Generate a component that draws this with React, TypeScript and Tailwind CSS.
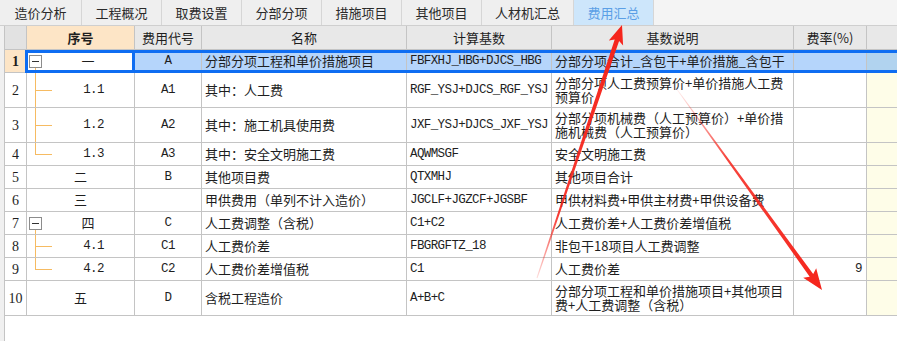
import React from 'react';

type Row = {
  n: string;
  seq: string;
  tree?: 'parent' | 'child' | 'last';
  code: string;
  name: string;
  base: string;
  desc: string;
  rate?: string;
  tall?: boolean;
};

const rows: Row[] = [
  { n: '1', seq: '一', tree: 'parent', code: 'A', name: '分部分项工程和单价措施项目', base: 'FBFXHJ_HBG+DJCS_HBG', desc: '分部分项合计_含包干+单价措施_含包干' },
  { n: '2', seq: '1.1', tree: 'child', code: 'A1', name: '其中：人工费', base: 'RGF_YSJ+DJCS_RGF_YSJ', desc: '分部分项人工费预算价+单价措施人工费预算价', tall: true },
  { n: '3', seq: '1.2', tree: 'child', code: 'A2', name: '其中：施工机具使用费', base: 'JXF_YSJ+DJCS_JXF_YSJ', desc: '分部分项机械费（人工预算价）+单价措施机械费（人工预算价）', tall: true },
  { n: '4', seq: '1.3', tree: 'last', code: 'A3', name: '其中：安全文明施工费', base: 'AQWMSGF', desc: '安全文明施工费' },
  { n: '5', seq: '二', code: 'B', name: '其他项目费', base: 'QTXMHJ', desc: '其他项目合计' },
  { n: '6', seq: '三', code: '', name: '甲供费用（单列不计入造价）', base: 'JGCLF+JGZCF+JGSBF', desc: '甲供材料费+甲供主材费+甲供设备费' },
  { n: '7', seq: '四', tree: 'parent', code: 'C', name: '人工费调整（含税）', base: 'C1+C2', desc: '人工费价差+人工费价差增值税' },
  { n: '8', seq: '4.1', tree: 'child', code: 'C1', name: '人工费价差', base: 'FBGRGFTZ_18', desc: '非包干18项目人工费调整' },
  { n: '9', seq: '4.2', tree: 'last', code: 'C2', name: '人工费价差增值税', base: 'C1', desc: '人工费价差', rate: '9' },
  { n: '10', seq: '五', code: 'D', name: '含税工程造价', base: 'A+B+C', desc: '分部分项工程和单价措施项目+其他项目费+人工费调整（含税）', tall: true },
];

const tabs = [
  { label: '造价分析', w: 'w-[82px]' },
  { label: '工程概况', w: 'w-[80px]' },
  { label: '取费设置', w: 'w-[80px]' },
  { label: '分部分项', w: 'w-[80px]' },
  { label: '措施项目', w: 'w-[80px]' },
  { label: '其他项目', w: 'w-[80px]' },
  { label: '人材机汇总', w: 'w-[92px]' },
  { label: '费用汇总', w: 'w-[80px]', active: true },
];

const cols = 'grid grid-cols-[22px_108px_67px_205px_145px_242px_73px_1fr]';
const cell = 'border-r border-b border-[#c4c4c4] flex items-center overflow-hidden';
const mono = "font-['Liberation_Mono',monospace] text-[12.5px] tracking-[-0.6px]";

// polygon for a tapered arrow, tail -> tip
function arrowPoints(x1: number, y1: number, x2: number, y2: number, w0: number, w1: number, hl: number, hw: number) {
  const dx = x2 - x1;
  const dy = y2 - y1;
  const L = Math.hypot(dx, dy);
  const ux = dx / L;
  const uy = dy / L;
  const nx = -uy;
  const ny = ux;
  const bx = x2 - ux * hl;
  const by = y2 - uy * hl;
  const nb = 3; // small notch at the back of the head
  const pts = [
    [x1 + nx * w0, y1 + ny * w0],
    [bx + nx * w1 + ux * nb, by + ny * w1 + uy * nb],
    [bx + nx * hw, by + ny * hw],
    [x2, y2],
    [bx - nx * hw, by - ny * hw],
    [bx - nx * w1 + ux * nb, by - ny * w1 + uy * nb],
    [x1 - nx * w0, y1 - ny * w0],
  ];
  return pts.map(p => `${p[0].toFixed(1)},${p[1].toFixed(1)}`).join(' ');
}

const ExpandBox = () => (
  <div className="shrink-0 ml-[2px] w-[13px] h-[13px] border border-[#8c8c8c] bg-white flex items-center justify-center">
    <div className="w-[7px] h-px bg-[#333]" />
  </div>
);

const SeqCell: React.FC<{ row: Row }> = ({ row }) => {
  const base = `${cell} relative bg-white`;
  if (row.tree === 'parent') {
    return (
      <div className={base}>
        <ExpandBox />
        <div className="absolute left-[8px] top-[calc(50%+7px)] bottom-[-1px] w-px bg-[#f6bb62]" />
        <div className="flex-1 text-center">{row.seq}</div>
      </div>
    );
  }
  if (row.tree === 'child' || row.tree === 'last') {
    return (
      <div className={base}>
        <div className={`absolute left-[8px] top-[-1px] w-px bg-[#f6bb62] ${row.tree === 'last' ? 'h-[calc(50%+1px)]' : 'bottom-[-1px]'}`} />
        <div className="absolute left-[8px] top-1/2 w-[17px] h-px bg-[#f6bb62]" />
        <div className={`flex-1 text-center pl-[26px] ${mono}`}>{row.seq}</div>
      </div>
    );
  }
  return (
    <div className={base}>
      <div className="flex-1 text-center">{row.seq}</div>
    </div>
  );
};

export default function App() {
  return (
    <div className="relative w-[897px] h-[341px] overflow-hidden bg-white text-[13px] text-[#1e1e1e] font-['Noto_Sans_CJK_SC',sans-serif]">
      {/* tabs */}
      <div className="flex h-[26px] bg-[#f4f4f4] border-b border-[#cfcfcf]">
        {tabs.map(t => (
          <div
            key={t.label}
            className={`${t.w} flex items-center justify-center border-r border-[#d6d6d6] ${t.active ? 'bg-[#cde6fb] text-[#5b9fe6]' : 'bg-[#efefef] text-[#2a2a2a]'}`}
          >
            {t.label}
          </div>
        ))}
      </div>

      <div className="flex">
        <div className="w-[5px] h-[315px] bg-[#f0f0f0] border-r border-[#c4c4c4]" />
        <div className="flex-1">
          {/* header */}
          <div className={`${cols} h-[24px] bg-[#e8e8e8]`}>
            <div className={`${cell} bg-[#e2e2e2]`} />
            <div className={`${cell} justify-center bg-[#fde5c6] font-bold`}>序号</div>
            <div className={`${cell} justify-center`}>费用代号</div>
            <div className={`${cell} justify-center`}>名称</div>
            <div className={`${cell} justify-center`}>计算基数</div>
            <div className={`${cell} justify-center`}>基数说明</div>
            <div className={`${cell} justify-center`}>费率(%)</div>
            <div className="border-b border-[#c4c4c4]" />
          </div>

          {rows.map((r, i) => {
            const sel = i === 0;
            const rowBg = sel ? 'bg-[#b5d5fb]' : 'bg-white';
            return (
              <div key={r.n} className={`${cols} relative ${r.tall ? 'h-[35px]' : 'h-[23px]'}`}>
                <div className={`${cell} justify-center font-['Liberation_Serif',serif] text-[14px] ${sel ? 'bg-[#fde5c6] font-bold' : 'bg-white'}`}>{r.n}</div>
                <SeqCell row={r} />
                <div className={`${cell} justify-center ${mono} ${rowBg}`}>{r.code}</div>
                <div className={`${cell} px-[3px] whitespace-nowrap ${rowBg}`}>{r.name}</div>
                <div className={`${cell} px-[3px] whitespace-nowrap ${mono} ${rowBg}`}>{r.base}</div>
                <div className={`${cell} pl-[3px] pr-[4px] leading-[14px] ${rowBg}`}>{r.desc}</div>
                <div className={`${cell} justify-end pr-[4px] ${mono} ${rowBg}`}>{r.rate}</div>
                <div className={`border-b border-[#c4c4c4] ${sel ? 'bg-[#b1d3ef]' : 'bg-[#fefde8]'}`} />
                {sel && (
                  <>
                    <div className="absolute left-[20px] right-0 top-0 bottom-0 border-y-[3px] border-[#0e6df2] pointer-events-none" />
                    <div className="absolute left-[20px] w-[110px] top-0 bottom-0 border-[3px] border-[#0e6df2] pointer-events-none" />
                  </>
                )}
              </div>
            );
          })}
        </div>
      </div>

      {/* red annotation arrows */}
      <svg className="absolute inset-0 pointer-events-none" width="897" height="341" viewBox="0 0 897 341">
        <defs>
          <linearGradient id="g1" gradientUnits="userSpaceOnUse" x1="537" y1="278" x2="622" y2="25">
            <stop offset="0" stopColor="#f5241b" stopOpacity="0.15" />
            <stop offset="0.25" stopColor="#f5241b" stopOpacity="0.9" />
            <stop offset="1" stopColor="#f5241b" />
          </linearGradient>
          <linearGradient id="g2" gradientUnits="userSpaceOnUse" x1="676" y1="88" x2="822" y2="290">
            <stop offset="0" stopColor="#f5241b" stopOpacity="0.05" />
            <stop offset="0.35" stopColor="#f5241b" stopOpacity="0.85" />
            <stop offset="1" stopColor="#f5241b" />
          </linearGradient>
        </defs>
        <polygon points={arrowPoints(537, 278, 622, 25, 0.5, 2.3, 19, 7.5)} fill="url(#g1)" />
        <polygon points={arrowPoints(676, 88, 822, 290, 0.4, 2.2, 21, 8)} fill="url(#g2)" />
      </svg>
    </div>
  );
}
